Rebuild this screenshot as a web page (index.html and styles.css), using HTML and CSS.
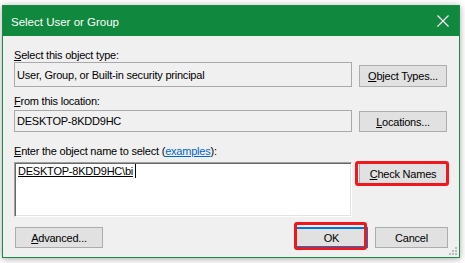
FILE: index.html
```html
<!DOCTYPE html>
<html>
<head>
<meta charset="utf-8">
<link rel="stylesheet" href="styles.css">
</head>
<body>
<div class="window">
  <div class="titlebar">
    <span class="title">Select User or Group</span>
    <svg class="close" width="12" height="12" viewBox="0 0 12 12"><path d="M0.5 0.5 L11.5 11.5 M11.5 0.5 L0.5 11.5" stroke="#fff" stroke-width="1.1" fill="none"/></svg>
  </div>
  <div class="body">
    <div class="label l1"><u>S</u>elect this object type:</div>
    <div class="row r1">
      <div class="field ro f1">User, Group, or Built-in security principal</div>
      <button class="btn b1"><u>O</u>bject Types...</button>
    </div>
    <div class="label l2"><u>F</u>rom this location:</div>
    <div class="row r2">
      <div class="field ro f2">DESKTOP-8KDD9HC</div>
      <button class="btn b2"><u>L</u>ocations...</button>
    </div>
    <div class="label l3"><u>E</u>nter the object name to select (<a class="link">examples</a>):</div>
    <div class="row r3">
      <div class="field edit"><span class="resolved">DESKTOP-8KDD9HC\bi</span><span class="caret"></span></div>
      <button class="btn b3 marked mark-check"><u>C</u>heck Names</button>
    </div>
    <div class="footer">
      <button class="btn adv"><u>A</u>dvanced...</button>
      <div class="spacer"></div>
      <button class="btn ok default marked mark-ok">OK</button>
      <button class="btn cancel">Cancel</button>
    </div>
  </div>
  <svg class="grip" width="8" height="8" viewBox="0 0 8 8">
    <rect x="6" y="0" width="2" height="2" fill="#bcbcbc"/>
    <rect x="3" y="3" width="2" height="2" fill="#bcbcbc"/>
    <rect x="6" y="3" width="2" height="2" fill="#bcbcbc"/>
    <rect x="0" y="6" width="2" height="2" fill="#bcbcbc"/>
    <rect x="3" y="6" width="2" height="2" fill="#bcbcbc"/>
    <rect x="6" y="6" width="2" height="2" fill="#bcbcbc"/>
  </svg>
</div>
</body>
</html>
```

FILE: styles.css
```css
html, body {
  margin: 0;
  padding: 0;
  background: #ffffff;
}
body {
  width: 465px;
  height: 263px;
  overflow: hidden;
  font-family: "Liberation Sans", Arial, sans-serif;
  font-size: 11px;
  color: #000;
}
.window {
  position: relative;
  box-sizing: border-box;
  margin: 5px 0 0 2px;
  width: 458px;
  height: 253px;
  border: 1px solid #1a8a45;
  background: #f0f0f0;
  box-shadow: 0 1px 7px rgba(0,0,0,0.35);
  display: flex;
  flex-direction: column;
}
.titlebar {
  height: 30px;
  flex: none;
  background: #10893e;
  color: #fff;
  display: flex;
  align-items: center;
  padding: 0 10px 0 8px;
}
.title {
  font-size: 11.5px;
  flex: 1;
  padding-top: 1px;
}
.close {
  display: block;
}
.body {
  flex: 1;
  padding: 0 11px 0 11px;
  display: flex;
  flex-direction: column;
  letter-spacing: -0.22px;
}
.label {
  height: 14px;
  line-height: 14px;
  white-space: nowrap;
}
.l1 { margin-top: 12px; }
.l2 { margin-top: 7px; }
.l3 { margin-top: 12px; }
.link {
  color: #0066cc;
  text-decoration: underline;
}
.row {
  display: flex;
  gap: 7px;
}
.r1 { height: 25px; align-items: flex-end; }
.r2 { margin-top: 2px; height: 22px; align-items: flex-end; }
.r3 { margin-top: 4px; height: 55px; align-items: flex-start; }
.field {
  box-sizing: border-box;
  width: 338px;
  flex: none;
  padding-left: 2px;
  white-space: nowrap;
}
.ro {
  border: 1px solid #a9a9a9;
  background: #f0f0f0;
  display: flex;
  align-items: center;
}
.f1 { height: 25px; align-self: stretch; }
.f2 { height: 22px; }
.edit {
  height: 55px;
  background: #fff;
  border-top: 1px solid #a0a0a0;
  border-left: 1px solid #a0a0a0;
  border-right: 1px solid #ffffff;
  border-bottom: 1px solid #ffffff;
  box-shadow: inset 1px 1px 0 #696969, inset -1px -1px 0 #e3e3e3;
  padding: 1px 0 0 3px;
  line-height: 15px;
  display: flex;
  align-items: flex-start;
}
.resolved {
  text-decoration: underline;
}
.caret {
  display: inline-block;
  width: 1px;
  height: 14px;
  background: #000;
  margin-left: 2px;
}
.btn {
  box-sizing: border-box;
  font-family: "Liberation Sans", Arial, sans-serif;
  font-size: 11px;
  letter-spacing: -0.22px;
  color: #000;
  background: #e1e1e1;
  border: 1px solid #adadad;
  border-radius: 0;
  padding: 0;
  margin: 0;
  width: 88px;
  height: 22px;
  flex: none;
  position: relative;
  text-align: center;
}
.b1 { height: 22px; }
.b2 { height: 21px; }
.b3 { height: 21px; margin-top: 1px; }
.footer {
  margin-top: 10px;
  display: flex;
  height: 21px;
}
.footer .btn { height: 21px; }
.adv { margin-left: 1px; width: 88px; }
.spacer { flex: 1; }
.ok { width: 73px; margin-right: 7px; }
.cancel { width: 73px; }
.default {
  border: 1px solid #0078d7;
  box-shadow: inset 0 0 0 1px #0078d7;
}
.marked::after {
  content: "";
  position: absolute;
  border: 3px solid #f0181c;
  border-radius: 3px;
  pointer-events: none;
}
.mark-check::after {
  left: -5px;
  right: -3px;
  top: -3px;
  bottom: -3px;
}
.mark-ok::after {
  left: -2px;
  right: 0px;
  top: -6px;
  bottom: -3px;
}
.grip {
  position: absolute;
  right: 2px;
  bottom: 2px;
}
```
